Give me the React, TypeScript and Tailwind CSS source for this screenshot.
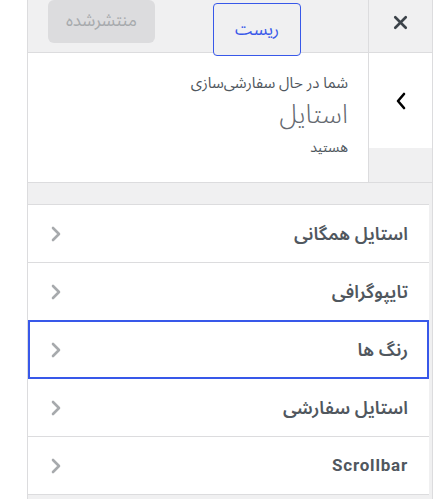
import { X } from "lucide-react";

const font = { fontFamily: '"Noto Sans Arabic", "Noto Naskh Arabic", "DejaVu Sans", sans-serif' };

const sections = [
  { title: "استایل همگانی" },
  { title: "تایپوگرافی" },
  { title: "رنگ ها", active: true },
  { title: "استایل سفارشی" },
  { title: "Scrollbar", latin: true },
];

function Chevron({ className }: { className?: string }) {
  return (
    <svg width="10" height="16" viewBox="0 0 10 16" className={className} fill="none">
      <path d="M2 2l6 6-6 6" stroke="currentColor" strokeWidth="2.6" strokeLinecap="round" strokeLinejoin="round" />
    </svg>
  );
}

export default function App() {
  return (
    <div className="min-h-[499px] w-[437px] bg-white overflow-hidden" style={font}>
      <div dir="rtl" className="ml-[27px] w-[406px] min-h-[499px] bg-[#f0f0f1] border-x border-[#dcdcde]">
        {/* Header */}
        <div className="flex items-start h-[53px] border-b border-[#dcdcde] relative z-10">
          <button className="w-16 h-[52px] pb-[7px] flex items-center justify-center border-l border-[#dcdcde] text-[#3c434a]">
            <X size={21} strokeWidth={3} />
          </button>
          <button className="mr-[67px] mt-[3px] w-[88px] h-[53px] rounded-[4px] border border-[#3858e9] bg-[#f0f0f1] text-[#3858e9] text-[17px] leading-none pt-[2px]">
            ریست
          </button>
          <button className="mr-[58px] w-[107px] h-[43px] rounded-[6px] bg-[#dcdcde] text-[#a7aaad] text-[17px] leading-none">
            منتشرشده
          </button>
        </div>

        {/* Info */}
        <div className="flex h-[130px] border-b border-[#dcdcde]">
          <div className="w-16 border-l border-[#dcdcde]">
            <div className="h-[95px] bg-white flex items-center justify-center text-black">
              <svg width="12" height="18" viewBox="0 0 12 18" fill="none">
                <path d="M9 2L3 9l6 7" stroke="currentColor" strokeWidth="2.6" strokeLinecap="round" strokeLinejoin="round" />
              </svg>
            </div>
          </div>
          <div className="flex-1 bg-white pr-5 pt-[18px]">
            <div className="text-[15px] text-[#50575e] leading-[24px]">شما در حال سفارشی‌سازی</div>
            <div className="text-[26px] font-light text-[#646970] leading-[32px] mt-[4px]">استایل</div>
            <div className="text-[14px] text-[#50575e] leading-[22px] mt-[6px]">هستید</div>
          </div>
        </div>

        {/* Sections */}
        <div className="mt-[21px] border-t border-[#dcdcde] mr-[3px]">
          {sections.map((s) =>
            s.active ? (
              <div
                key={s.title}
                className="h-[59px] -mt-px bg-white border-2 border-[#3858e9] flex items-center justify-between pr-[19px] pl-[21px]"
              >
                <span className="text-[18px] font-semibold text-[#50575e] leading-none">{s.title}</span>
                <Chevron className="text-[#a7aaad]" />
              </div>
            ) : (
              <div
                key={s.title}
                className="h-[58px] bg-white border-b border-[#dcdcde] flex items-center justify-between pr-[21px] pl-[23px]"
              >
                <span
                  className={
                    s.latin
                      ? "text-[17px] font-bold tracking-[0.8px] text-[#50575e] leading-none"
                      : "text-[18px] font-semibold text-[#50575e] leading-none"
                  }
                  style={s.latin ? { fontFamily: "Roboto, sans-serif" } : undefined}
                >
                  {s.title}
                </span>
                <Chevron className="text-[#a7aaad]" />
              </div>
            )
          )}
        </div>
      </div>
    </div>
  );
}
